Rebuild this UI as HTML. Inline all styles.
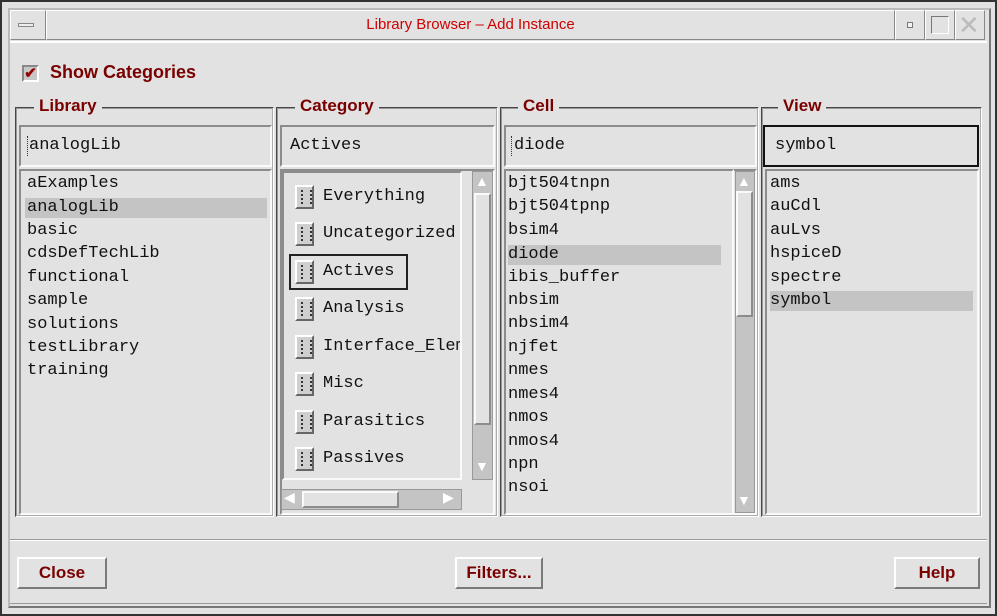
<!DOCTYPE html>
<html><head><style>
*{box-sizing:border-box;margin:0;padding:0}
body{width:997px;height:616px;background:#e2e2e2;position:relative;overflow:hidden;font-family:"Liberation Sans",sans-serif}
.a{position:absolute}
.sunk{border:2px solid;border-color:#8c8c8c #fafafa #fafafa #8c8c8c;background:#e2e2e2}
.rais{border:2px solid;border-color:#fafafa #8c8c8c #8c8c8c #fafafa;background:#e2e2e2}
.grp{border:2px groove #b8b8b8;border-color:#9a9a9a #fff #fff #9a9a9a}
.lab{position:absolute;top:-13px;background:#e2e2e2;padding:0 5px;color:#7a0000;font-weight:bold;font-size:17px}
.mono{font-family:"Liberation Mono",monospace;font-size:17px;color:#111}
.li{position:absolute;left:6px;height:20px;line-height:20px;white-space:nowrap}
.hl{background:#c4c4c4}
.ic{position:absolute;width:19px;height:24px;border:2px solid;border-color:#fff #666 #666 #fff;background:#cfcfcf}
.ic:after{content:"";position:absolute;left:4px;top:3px;width:7px;height:14px;border-left:2px dotted #333;border-right:2px dotted #333}
.btn{position:absolute;height:32px;border:2px solid;border-color:#fff #7a7a7a #7a7a7a #fff;color:#7a0000;font-weight:bold;font-size:17px;text-align:center;line-height:28px;transform-origin:center}
</style></head><body>
<div class="a" style="left:0;top:0;width:997px;height:616px;border:2px solid #333"></div>
<div class="a" style="left:8px;top:8px;width:983px;height:600px;border:2px solid #aaa;border-color:#bbb #777 #777 #bbb"></div>
<!-- title bar -->
<div class="a" style="left:10px;top:10px;width:36px;height:30px;border:1px solid;border-color:#fff #888 #888 #fff"></div>
<div class="a" style="left:18px;top:23px;width:16px;height:4px;border:1px solid #888;background:#eee"></div>
<div class="a" style="left:46px;top:10px;width:849px;height:30px;border:1px solid;border-color:#fff #888 #888 #fff"></div>
<div class="a" style="left:46px;top:16px;width:849px;text-align:center;color:#d00000;font-size:15px">Library Browser – Add Instance</div>
<div class="a" style="left:895px;top:10px;width:30px;height:30px;border:1px solid;border-color:#fff #888 #888 #fff"></div>
<div class="a" style="left:907px;top:22px;width:6px;height:6px;border:1px solid #777;background:#f4f4f4"></div>
<div class="a" style="left:925px;top:10px;width:30px;height:30px;border:1px solid;border-color:#fff #888 #888 #fff"></div>
<div class="a" style="left:931px;top:16px;width:18px;height:18px;border:1px solid;border-color:#777 #fff #fff #777"></div>
<div class="a" style="left:955px;top:10px;width:30px;height:30px;border:1px solid;border-color:#fff #888 #888 #fff"></div>
<div class="a" style="left:958px;top:12px;color:#bbb;font-size:26px;line-height:26px">✕</div>
<div class="a" style="left:10px;top:41px;width:977px;height:2px;background:#fff"></div>
<!-- show categories -->
<div class="a" style="left:22px;top:65px;width:17px;height:17px;border:2px solid;border-color:#888 #fff #fff #888;background:#c8c8c8;color:#900;font-size:15px;line-height:13px;text-align:center;font-weight:bold">✔</div>
<div class="a" style="left:50px;top:62px;color:#7a0000;font-weight:bold;font-size:18px">Show Categories</div>
<!-- groups -->
<div class="a grp" style="left:15px;top:107px;width:259px;height:410px"><div class="lab" style="left:17px">Library</div></div>
<div class="a grp" style="left:276px;top:107px;width:222px;height:410px"><div class="lab" style="left:17px">Category</div></div>
<div class="a grp" style="left:500px;top:107px;width:259px;height:410px"><div class="lab" style="left:16px">Cell</div></div>
<div class="a grp" style="left:761px;top:107px;width:221px;height:410px"><div class="lab" style="left:15px">View</div></div>
<!-- fields -->
<div class="a sunk mono" style="left:19px;top:125px;width:253px;height:42px;padding:9px 0 0 8px">analogLib</div>
<div class="a" style="left:27px;top:136px;width:2px;height:20px;border-left:1px dotted #333"></div>
<div class="a sunk mono" style="left:280px;top:125px;width:215px;height:42px;padding:9px 0 0 8px">Actives</div>
<div class="a sunk mono" style="left:504px;top:125px;width:253px;height:42px;padding:9px 0 0 8px">diode</div>
<div class="a" style="left:511px;top:136px;width:2px;height:20px;border-left:1px dotted #333"></div>
<div class="a mono" style="left:763px;top:125px;width:216px;height:42px;border:2px solid #111;padding:9px 0 0 10px">symbol</div>
<!-- library list -->
<div class="a sunk mono" style="left:19px;top:169px;width:253px;height:346px">
<div class="li" style="top:3px">aExamples</div>
<div class="li hl" style="top:27px;width:242px;left:4px;padding-left:2px">analogLib</div>
<div class="li" style="top:50px">basic</div>
<div class="li" style="top:73px">cdsDefTechLib</div>
<div class="li" style="top:97px">functional</div>
<div class="li" style="top:120px">sample</div>
<div class="li" style="top:144px">solutions</div>
<div class="li" style="top:167px">testLibrary</div>
<div class="li" style="top:190px">training</div>
</div>
<!-- category -->
<div class="a sunk" style="left:280px;top:169px;width:215px;height:346px"></div>
<div class="a sunk mono" style="left:282px;top:171px;width:180px;height:309px;overflow:hidden">
<div class="ic" style="left:11px;top:12px"></div><div class="li" style="left:39px;top:14px">Everything</div>
<div class="ic" style="left:11px;top:49px"></div><div class="li" style="left:39px;top:51px">Uncategorized</div>
<div class="a" style="left:5px;top:81px;width:119px;height:36px;border:2px solid #222"></div>
<div class="ic" style="left:11px;top:87px"></div><div class="li" style="left:39px;top:89px">Actives</div>
<div class="ic" style="left:11px;top:124px"></div><div class="li" style="left:39px;top:126px">Analysis</div>
<div class="ic" style="left:11px;top:162px"></div><div class="li" style="left:39px;top:164px">Interface_Elements</div>
<div class="ic" style="left:11px;top:199px"></div><div class="li" style="left:39px;top:201px">Misc</div>
<div class="ic" style="left:11px;top:237px"></div><div class="li" style="left:39px;top:239px">Parasitics</div>
<div class="ic" style="left:11px;top:274px"></div><div class="li" style="left:39px;top:276px">Passives</div>
</div>
<div class="a" style="left:472px;top:171px;width:21px;height:309px;background:#c4c4c4;border:1px solid #999"></div>
<div class="a rais" style="left:474px;top:193px;width:17px;height:232px"></div>
<div class="a" style="left:475px;top:173px;color:#fff;font-size:14px">▲</div>
<div class="a" style="left:475px;top:458px;color:#fff;font-size:14px">▼</div>
<div class="a" style="left:281px;top:489px;width:181px;height:21px;background:#c4c4c4;border:1px solid #999"></div>
<div class="a rais" style="left:302px;top:491px;width:97px;height:17px"></div>
<div class="a" style="left:284px;top:489px;color:#fff;font-size:14px">◀</div>
<div class="a" style="left:443px;top:489px;color:#fff;font-size:14px">▶</div>
<!-- cell list -->
<div class="a sunk" style="left:504px;top:169px;width:253px;height:346px"></div>
<div class="a sunk mono" style="left:504px;top:169px;width:230px;height:346px">
<div class="li" style="top:3px;left:2px">bjt504tnpn</div>
<div class="li" style="top:26px;left:2px">bjt504tpnp</div>
<div class="li" style="top:50px;left:2px">bsim4</div>
<div class="li hl" style="top:74px;left:2px;width:213px">diode</div>
<div class="li" style="top:97px;left:2px">ibis_buffer</div>
<div class="li" style="top:120px;left:2px">nbsim</div>
<div class="li" style="top:143px;left:2px">nbsim4</div>
<div class="li" style="top:167px;left:2px">njfet</div>
<div class="li" style="top:190px;left:2px">nmes</div>
<div class="li" style="top:214px;left:2px">nmes4</div>
<div class="li" style="top:237px;left:2px">nmos</div>
<div class="li" style="top:261px;left:2px">nmos4</div>
<div class="li" style="top:284px;left:2px">npn</div>
<div class="li" style="top:307px;left:2px">nsoi</div>
</div>
<div class="a" style="left:735px;top:171px;width:20px;height:342px;background:#c4c4c4;border:1px solid #999"></div>
<div class="a rais" style="left:736px;top:191px;width:17px;height:126px"></div>
<div class="a" style="left:737px;top:173px;color:#fff;font-size:14px">▲</div>
<div class="a" style="left:737px;top:492px;color:#fff;font-size:14px">▼</div>
<!-- view list -->
<div class="a sunk mono" style="left:765px;top:169px;width:214px;height:346px">
<div class="li" style="top:3px;left:3px">ams</div>
<div class="li" style="top:26px;left:3px">auCdl</div>
<div class="li" style="top:50px;left:3px">auLvs</div>
<div class="li" style="top:73px;left:3px">hspiceD</div>
<div class="li" style="top:97px;left:3px">spectre</div>
<div class="li hl" style="top:120px;left:3px;width:203px">symbol</div>
</div>
<!-- separator -->
<div class="a" style="left:10px;top:539px;width:977px;height:2px;border-top:1px solid #999;border-bottom:1px solid #fff"></div>
<!-- buttons -->
<div class="btn" style="left:17px;top:557px;width:90px">Close</div>
<div class="btn" style="left:455px;top:557px;width:88px">Filters...</div>
<div class="btn" style="left:894px;top:557px;width:86px">Help</div>
<div class="a" style="left:10px;top:603px;width:977px;height:1px;background:#999"></div>
</body></html>
